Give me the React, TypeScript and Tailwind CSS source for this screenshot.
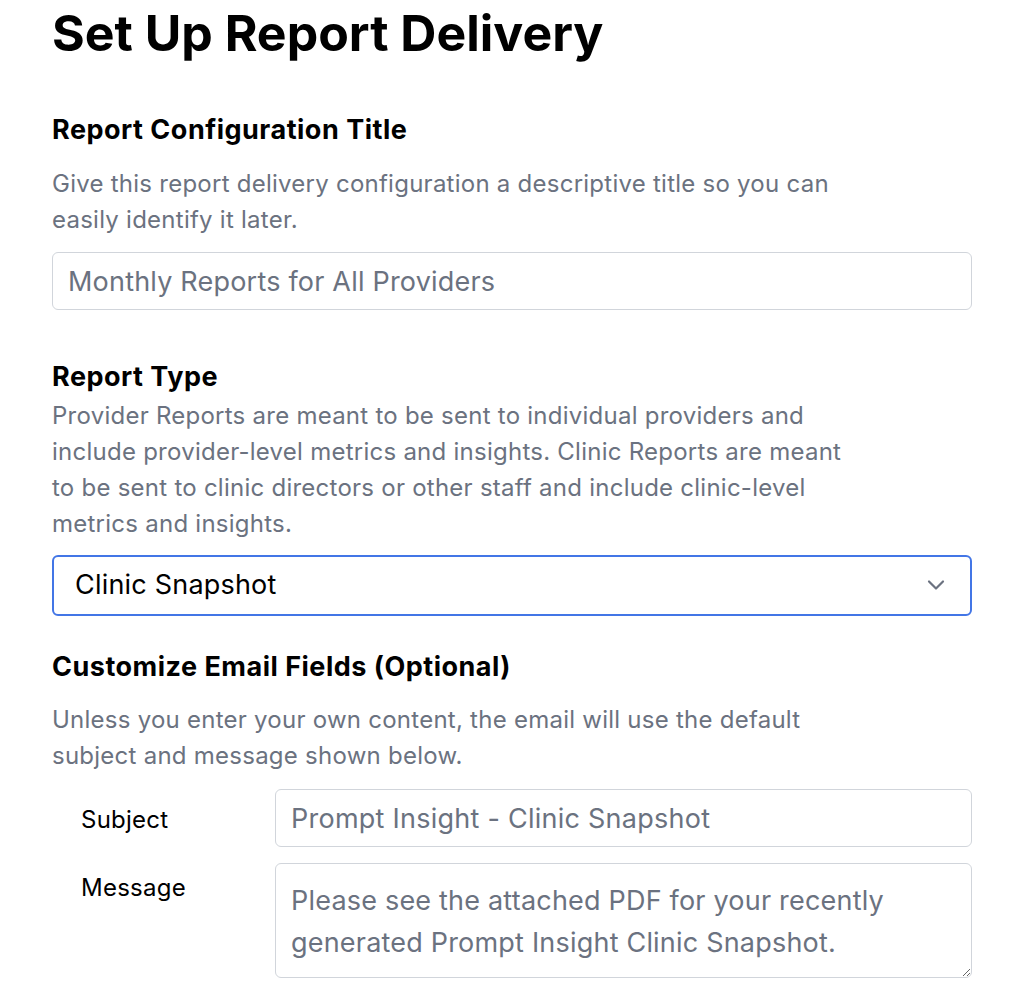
import React from "react";

export default function App() {
  const font = { fontFamily: "Inter, 'Noto Sans', sans-serif" };
  return (
    <div className="min-h-[1002px] w-full bg-white text-black" style={font}>
      <div className="px-[52px] w-[1024px]">
        <h1 className="pt-[5px] text-[50px] font-bold leading-[56px] tracking-[0px]">
          Set Up Report Delivery
        </h1>

        <h2 className="mt-[53px] text-[27px] font-bold leading-[32px] tracking-[0.5px]">
          Report Configuration Title
        </h2>
        <p className="mt-[20px] text-[24px] leading-[36px] tracking-[0.25px] text-[#6b7280]">
          Give this report delivery configuration a descriptive title so you can
          <br />
          easily identify it later.
        </p>
        <input
          className="mt-[14px] block h-[58px] w-[920px] rounded-[6px] border border-[#d1d5db] px-[15px] text-[27px] tracking-[0.2px] text-black outline-none placeholder:text-[#6b7280]"
          placeholder="Monthly Reports for All Providers"
        />

        <h2 className="mt-[51px] text-[27px] font-bold leading-[32px] tracking-[0.5px]">Report Type</h2>
        <p className="mt-[5px] text-[24px] leading-[36px] tracking-[0.25px] text-[#6b7280]">
          Provider Reports are meant to be sent to individual providers and
          <br />
          include provider-level metrics and insights. Clinic Reports are meant
          <br />
          to be sent to clinic directors or other staff and include clinic-level
          <br />
          metrics and insights.
        </p>
        <div className="relative mt-[13px] w-[920px]">
          <select
            className="block h-[61px] w-full appearance-none rounded-[6px] border-2 border-[#4376e6] bg-white px-[21px] text-[27px] tracking-[0.2px] text-black outline-none"
            defaultValue="clinic"
          >
            <option value="clinic">Clinic Snapshot</option>
            <option value="provider">Provider Report</option>
          </select>
          <svg
            className="pointer-events-none absolute right-[27px] top-[23px]"
            width="18"
            height="14"
            viewBox="0 0 18 14"
            fill="none"
          >
            <path d="M2 3.5 L9 10.5 L16 3.5" stroke="#6b7280" strokeWidth="2.2" strokeLinecap="round" strokeLinejoin="round" />
          </svg>
        </div>

        <h2 className="mt-[35px] text-[27px] font-bold leading-[32px] tracking-[0.5px]">
          Customize Email Fields (Optional)
        </h2>
        <p className="mt-[19px] text-[24px] leading-[36px] tracking-[0.25px] text-[#6b7280]">
          Unless you enter your own content, the email will use the default
          <br />
          subject and message shown below.
        </p>

        <div className="mt-[15px] flex items-start">
          <label className="w-[223px] shrink-0 pl-[29px] pt-[13px] text-[24px] leading-[36px] tracking-[0.25px]">Subject</label>
          <input
            className="block h-[58px] w-[697px] rounded-[6px] border border-[#d1d5db] px-[15px] text-[27px] tracking-[0.25px] text-black outline-none placeholder:text-[#6b7280]"
            placeholder="Prompt Insight - Clinic Snapshot"
          />
        </div>
        <div className="mt-[16px] flex items-start">
          <label className="w-[223px] shrink-0 pl-[29px] pt-[7px] text-[24px] leading-[36px] tracking-[0.25px]">Message</label>
          <textarea
            className="block h-[115px] w-[697px] rounded-[6px] border border-[#d1d5db] px-[15px] pt-[16px] text-[27px] leading-[42px] tracking-[0.2px] text-black outline-none placeholder:text-[#6b7280]"
            placeholder="Please see the attached PDF for your recently generated Prompt Insight Clinic Snapshot."
          />
        </div>
      </div>
    </div>
  );
}
